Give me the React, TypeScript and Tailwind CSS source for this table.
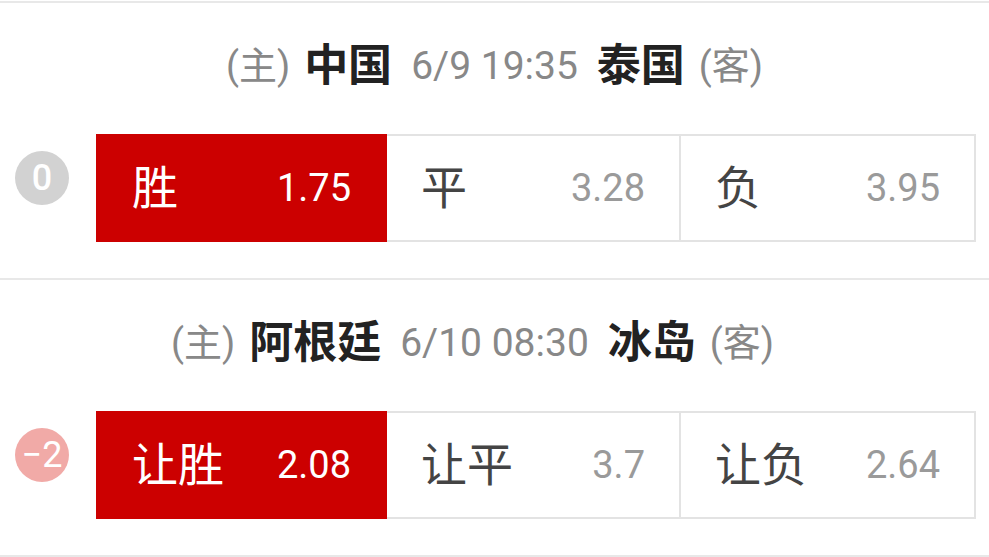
import React from "react";

const FONT = { fontFamily: 'Roboto, "Noto Sans CJK SC", sans-serif' };

type Cell = { label: string; odds: string; active?: boolean };
type Match = {
  home: string;
  away: string;
  time: string;
  badge: string;
  badgeClass: string;
  cells: Cell[];
};

const matches: Match[] = [
  {
    home: "中国",
    away: "泰国",
    time: "6/9 19:35",
    badge: "0",
    badgeClass: "bg-[#d2d2d2] font-medium",
    cells: [
      { label: "胜", odds: "1.75", active: true },
      { label: "平", odds: "3.28" },
      { label: "负", odds: "3.95" },
    ],
  },
  {
    home: "阿根廷",
    away: "冰岛",
    time: "6/10 08:30",
    badge: "−2",
    badgeClass: "bg-[#f1aaa7] font-normal",
    cells: [
      { label: "让胜", odds: "2.08", active: true },
      { label: "让平", odds: "3.7" },
      { label: "让负", odds: "2.64" },
    ],
  },
];

const widths = ["w-[291px]", "w-[294px]", "flex-1"];

function Section({ m }: { m: Match }) {
  return (
    <div className="border-t-2 border-[#e8e8e8] pt-[38px] pb-[36px]">
      <div className="grid grid-cols-[1fr_auto_1fr] items-center h-[50px] leading-none">
        <div className="flex items-center justify-end gap-[14px] pr-[19px]">
          <span className="text-[38px] text-[#888]">(主)</span>
          <span className="text-[44px] font-bold text-[#222]">{m.home}</span>
        </div>
        <span className="text-[39px] text-[#888]">{m.time}</span>
        <div className="flex items-center justify-start gap-[14px] pl-[19px]">
          <span className="text-[44px] font-bold text-[#222]">{m.away}</span>
          <span className="text-[38px] text-[#888]">(客)</span>
        </div>
      </div>
      <div className="flex items-center mt-[43px] pl-[15px] pr-[13px]">
        <div
          className={`w-[54px] h-[54px] rounded-full flex items-center justify-center text-white text-[36px] leading-none mb-[20px] shrink-0 ${m.badgeClass}`}
        >
          {m.badge}
        </div>
        <div className="flex flex-1 h-[108px] ml-[27px]">
          {m.cells.map((c, i) => (
            <div
              key={i}
              className={`${widths[i]} flex items-center justify-between px-[34px] border-y-2 border-r-2 ${
                i === 0 ? "border-l-2" : ""
              } ${
                c.active
                  ? "bg-[#cc0000] border-[#cc0000] text-white"
                  : "bg-white border-[#e3e3e3]"
              }`}
            >
              <span
                className={`text-[46px] leading-none ${
                  c.active ? "text-white" : "text-[#444]"
                }`}
              >
                {c.label}
              </span>
              <span
                className={`text-[38px] leading-none ${
                  c.active ? "text-white" : "text-[#9a9a9a]"
                }`}
              >
                {c.odds}
              </span>
            </div>
          ))}
        </div>
      </div>
    </div>
  );
}

export default function App() {
  return (
    <div className="w-[989px] h-[557px] bg-white overflow-hidden pt-px" style={FONT}>
      {matches.map((m, i) => (
        <Section key={i} m={m} />
      ))}
      <div className="border-t-2 border-[#e8e8e8]" />
    </div>
  );
}
